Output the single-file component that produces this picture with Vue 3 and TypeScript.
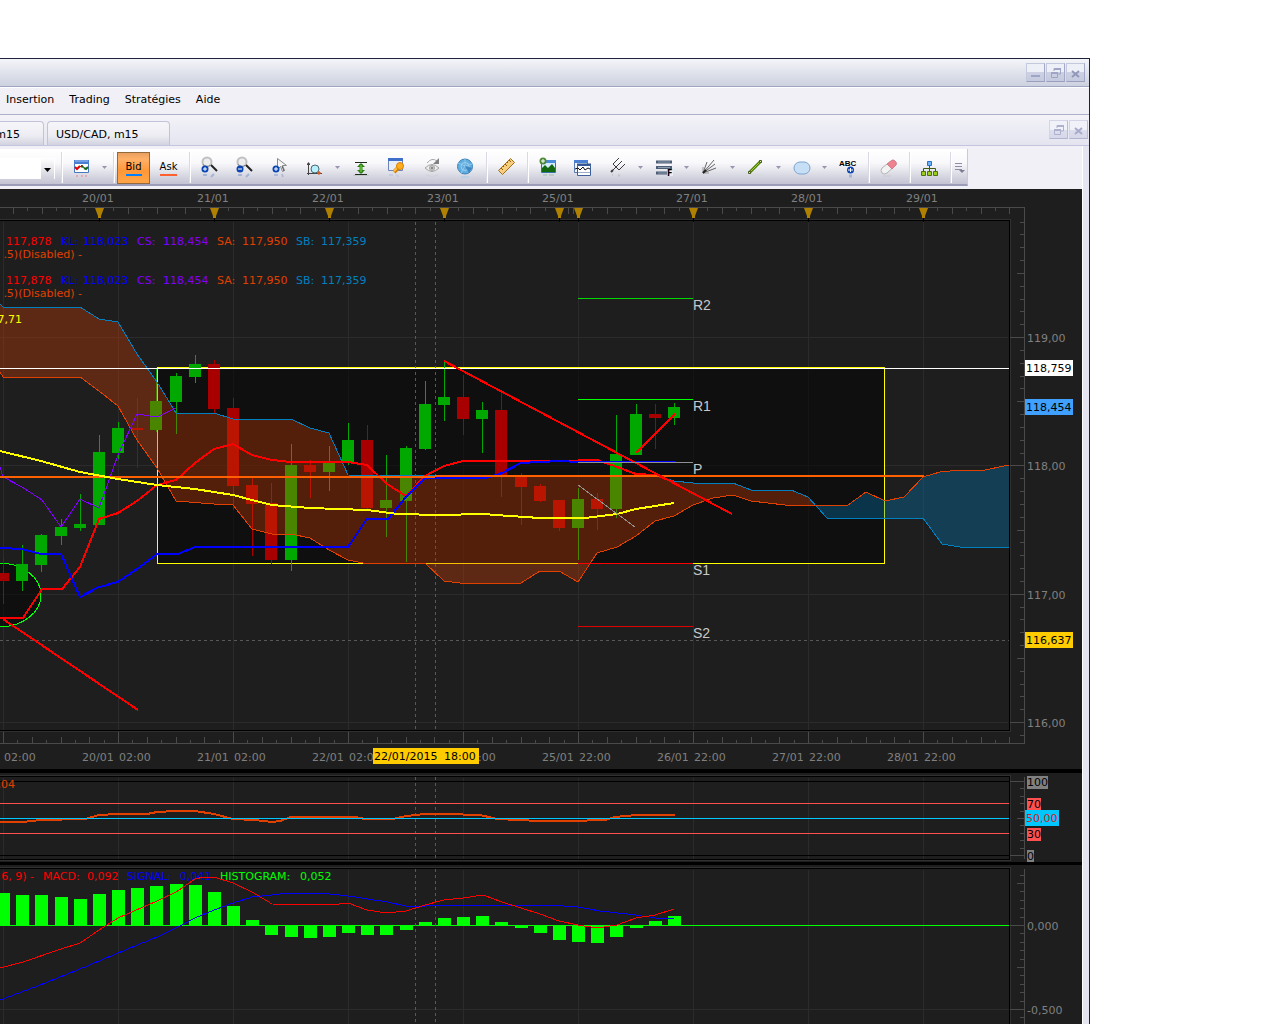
<script setup lang="ts">
type Candle = [high: number, top: number, bottom: number, low: number, up: 0 | 1]

const STEP = 115
const candleX = (i: number) => Math.round(3 + (i * STEP) / 6)

// high, body top, body bottom, low (screen rows), 1 = rising
const candles: Candle[] = [
  [557, 573, 581, 604, 0], [545, 564, 581, 591, 1], [534, 535, 565, 572, 1], [519, 527, 536, 545, 1],
  [494, 524, 528, 531, 1], [435, 452, 525, 525, 1], [422, 428, 453, 459, 1], [398, 428, 430, 468, 0],
  [369, 401, 430, 432, 1], [373, 376, 402, 434, 1], [355, 364, 377, 383, 1], [360, 364, 409, 414, 0],
  [398, 408, 486, 510, 0], [477, 485, 504, 556, 0], [483, 503, 560, 564, 0], [444, 465, 560, 571, 1],
  [460, 465, 472, 498, 0], [446, 463, 472, 491, 1], [423, 440, 463, 465, 1], [425, 440, 508, 509, 0],
  [455, 500, 508, 537, 1], [446, 448, 501, 562, 1], [381, 404, 449, 450, 1], [361, 397, 405, 421, 1],
  [375, 397, 419, 435, 0], [402, 410, 419, 453, 1], [391, 410, 475, 497, 0], [473, 475, 487, 525, 0],
  [484, 486, 501, 502, 0], [500, 500, 528, 531, 0], [488, 499, 528, 560, 1], [493, 499, 509, 530, 0],
  [415, 454, 509, 518, 1], [404, 414, 455, 455, 1], [404, 414, 418, 449, 0], [403, 407, 418, 425, 1],
]

const histogram = [
  893, 895, 895, 897, 899, 894, 890, 888, 886, 884, 885, 892, 906, 920, 935, 937, 938, 937,
  933, 935, 935, 930, 922, 918, 917, 916, 922, 928, 933, 940, 942, 943, 937, 928, 921, 916,
]

const majors = Array.from({ length: 9 }, (_, i) => 3 + i * STEP)
const grid = majors.map((x) => x + 0.5)
const markers = [99, 214, 329, 444, 559, 578, 693, 808, 923]

interface Tick { x: number; size: number }
function ticks(origin: number, from: number, to: number): Tick[] {
  const out: Tick[] = []
  for (let k = -80; k < 80; k++) {
    const x = Math.round(origin + k * 14.375)
    if (x >= from && x <= to) out.push({ x: x + 0.5, size: k % 2 === 0 ? 6 : 3 })
  }
  return out
}
const topTicks = [...ticks(99, 0, 560), { x: 568.5, size: 6 }, { x: 573.5, size: 6 }, ...ticks(578, 579, 1010)]
const bottomTicks = ticks(3, 0, 1010)

const topLabels = [
  { x: 82, t: '20/01' }, { x: 197, t: '21/01' }, { x: 312, t: '22/01' }, { x: 427, t: '23/01' },
  { x: 542, t: '25/01' }, { x: 676, t: '27/01' }, { x: 791, t: '28/01' }, { x: 906, t: '29/01' },
]
const bottomLabels = [
  ['19/01', '02:00'], ['20/01', '02:00'], ['21/01', '02:00'], ['22/01', '02:00'], ['22/01', '22:00'],
  ['25/01', '22:00'], ['26/01', '22:00'], ['27/01', '22:00'], ['28/01', '22:00'],
].map(([day, hour], i) => ({ day, hour, x: 3 + i * STEP - 36 }))

const legend = [
  { x: 61, vx: 83, t: 'KL:', v: '118,023', c: '#0000ff' },
  { x: 137, vx: 163, t: 'CS:', v: '118,454', c: '#8000ff' },
  { x: 217, vx: 242, t: 'SA:', v: '117,950', c: '#e04000' },
  { x: 296, vx: 321, t: 'SB:', v: '117,359', c: '#0080c0' },
]
const macdLegend = [
  { x: 43, vx: 87, t: 'MACD:', v: '0,092', c: '#ff0000' },
  { x: 127, vx: 180, t: 'SIGNAL:', v: '0,041', c: '#0000ff' },
  { x: 220, vx: 300, t: 'HISTOGRAM:', v: '0,052', c: '#00ff00' },
]

const priceTicks = Array.from({ length: 41 }, (_, i) => {
  const k = i - 1
  const y = Math.round(722 - k * 12.83) + 0.5
  return { y, size: k % 10 === 0 ? 14 : k % 5 === 0 ? 7 : 4 }
})
const prices = [
  { y: 342, t: '119,00' }, { y: 470, t: '118,00' }, { y: 599, t: '117,00' }, { y: 727, t: '116,00' },
]
const priceTags = [
  { y: 360, t: '118,759', c: '#ffffff' }, { y: 399, t: '118,454', c: '#40a0ff' }, { y: 632, t: '116,637', c: '#ffcc00' },
]
const rsiTicks = Array.from({ length: 11 }, (_, i) => ({
  y: Math.round(781 + i * 7.4) + 0.5, size: i % 10 === 0 ? 14 : i % 5 === 0 ? 7 : 4,
}))
const rsiTags = [
  { y: 776, w: 21, t: '100', c: '#808080' }, { y: 798, w: 14, t: '70', c: '#ff5050' },
  { y: 828, w: 14, t: '30', c: '#ff5050' }, { y: 850, w: 7, t: '0', c: '#808080' },
]
const macdTicks = Array.from({ length: 18 }, (_, i) => {
  const k = i - 6
  return { y: Math.round(925 + k * 8.4) + 0.5, size: k % 10 === 0 ? 14 : k % 5 === 0 ? 7 : 4 }
})

const pivots = [
  { y: 298, t: 'R2', c: '#00d800' }, { y: 399, t: 'R1', c: '#00ff00' }, { y: 462, t: 'P', c: '#909090' },
  { y: 563, t: 'S1', c: '#ff0000' }, { y: 626, t: 'S2', c: '#e00000' },
]

const spanB = '0,304 3,307 80,307 99,319 118,322 137,354 157,382 176,413 214,413 233,419 291,419 310,428 329,433 348,475 445,476 657,476 674,481 693,483 733,483 751,490 791,490 808,497'
const spanBTail = '827,518 923,518 942,544 960,547 1009,547'
const spanA = '0,372 3,377 80,377 99,391 118,406 137,440 157,468 176,501 214,504 233,505 252,529 272,534 291,534 310,538 329,550 348,560 363,563 425,563 444,581 460,583 521,583 540,571 559,571 578,582 597,553 617,547 636,536 655,521 674,516 693,505 713,498 733,495 751,501 785,505'
const spanATail = '848,505 866,492 885,501 904,497 923,477 940,472 960,470 985,470 1009,465'
const reverse = (s: string) => s.split(' ').reverse().join(' ')
const cloudRed = `${spanB} 815,505 ${reverse(spanA)}`
const cloudBlue = `815,505 ${spanATail} ${reverse(spanBTail)}`

const tenkan = '0,618 23,618 42,589 62,589 80,567 99,519 118,513 137,501 157,485 176,480 195,463 214,449 233,444 252,455 272,460 291,462 348,462 367,465 387,484 406,496 425,476 444,466 463,461 560,461 597,460 617,467 636,474 655,475 674,482'
const kijun = '0,548 22,549 41,554 61,554 80,597 99,587 118,582 137,569 157,554 178,554 195,547 348,547 367,519 388,519 406,497 425,478 486,478 502,473 521,463 560,461 578,462'
const average = '0,451 41,461 80,472 118,479 157,485 195,489 233,495 252,500 272,505 310,508 367,510 398,514 440,515 483,514 510,516 540,518 585,518 617,514 636,509 655,506 674,503'
const chikou = '0,467 3,477 22,487 42,500 61,527 80,499 99,508 118,455 137,414 157,417 176,408'
const rsi = '0,822 23,822 40,820 85,819 99,815 118,814 147,814 157,812 176,811 195,811 214,814 233,819 255,820 272,822 280,821 291,817 355,817 365,819 393,819 406,816 425,814 445,814 480,815 497,819 540,821 569,821 605,820 615,817 637,815 675,815'
const macd = '0,968 23,962 61,949 80,943 99,930 118,918 157,901 176,892 195,879 204,877 214,877 233,883 252,892 272,904 330,905 348,903 367,910 387,913 406,911 425,905 444,900 463,898 483,895 502,902 521,908 540,914 559,921 578,925 597,928 617,925 636,918 655,915 674,909'
const signal = '0,1000 40,985 80,969 118,953 157,937 176,928 195,918 214,910 233,903 252,897 290,893 320,893 348,896 387,902 406,906 425,906 470,905 550,905 578,907 600,911 636,915 655,918 674,919'

const menu = ['Insertion', 'Trading', 'Stratégies', 'Aide']
</script>

<template>
  <div class="window">
    <header class="title">
      <button class="win" aria-label="Réduire"><svg width="17" height="17"><path d="M4 12h9" stroke="#9fa5c6" stroke-width="2" /></svg></button>
      <button class="win" aria-label="Restaurer"><svg width="17" height="17" fill="none" stroke="#9fa5c6"><path d="M7 7V4.500H13.500V10H11" /><path d="M7 5h7" stroke-width="2" /><path d="M4.500 8.500h6v5h-6z" /><path d="M4 9h7" stroke-width="2" /></svg></button>
      <button class="win" aria-label="Fermer"><svg width="17" height="17"><path d="M5 7l7 6M12 7l-7 6" stroke="#9298b8" stroke-width="2" /></svg></button>
    </header>
    <nav class="menu">
      <button v-for="m in menu" :key="m">{{ m }}</button>
    </nav>
    <div class="tabs">
      <button class="tab cut"><span>m15</span></button>
      <button class="tab full">USD/CAD, m15</button>
      <div class="grow"></div>
      <button class="win pale" aria-label="Restaurer le graphique"><svg width="17" height="17" fill="none" stroke="#aeb1cd"><path d="M7 7V4.500H13.500V10H11" /><path d="M7 5h7" stroke-width="2" /><path d="M4.500 8.500h6v5h-6z" /><path d="M4 9h7" stroke-width="2" /></svg></button>
      <button class="win pale" aria-label="Fermer le graphique"><svg width="17" height="17"><path d="M5 7l7 6M12 7l-7 6" stroke="#a8abc8" stroke-width="2" /></svg></button>
    </div>
    <main class="client">
      <div class="toolrow">
        <div class="toolbar">
          <div class="combo">
            <select aria-label="Période"><option></option></select>
            <span class="drop"><svg width="13" height="20"><path d="M3 10h7l-3.500 4z" fill="#000" /></svg></span>
          </div>
          <i class="sep"></i>
          <button class="tool" aria-label="Type de graphique">
            <svg width="23" height="24"><path d="M4.500 5.500h14v12h-14z" fill="#fff" stroke="#4a78c0" /><path d="M4 5h15v4H4z" fill="#4a7fd0" /><path d="M5 6h13" stroke="#9cc0f4" /><path d="M5 12l2 2 3-3" fill="none" stroke="#e00000" stroke-width="2" /><path d="M10 12l2-2 2 3" fill="none" stroke="#e00000" stroke-width="1" /><path d="M11 11l2 1M14 13l2 1 2-2" fill="none" stroke="#106818" stroke-width="2" /><path d="M6 21h2M11 21h2M15 21h2" stroke="#e5a9b4" stroke-width="2" /></svg>
          </button>
          <button class="caret" aria-label="Plus de types"><svg width="7" height="4"><path d="M1 0h5l-2.500 3z" /></svg></button>
          <i class="sep"></i>
          <button class="tool quote on"><span>Bid</span></button>
          <button class="tool quote"><span>Ask</span></button>
          <i class="sep"></i>
          <button class="tool" aria-label="Zoom avant">
            <svg width="23" height="24"><circle cx="9" cy="7" r="4.500" fill="#ededed" stroke="#c0c0c0" stroke-width="2" /><path d="M5 9a4 4 0 007 1" fill="none" stroke="#888" /><path d="M13 10l6 6" stroke="#222" stroke-width="2" /><circle cx="7" cy="14" r="3.500" fill="#0a46b4" /><path d="M5 14h4M7 12v4" stroke="#fff" /><path d="M5 20h4M16 19l-3 3" stroke="#a5b4d4" stroke-width="2" /></svg>
          </button>
          <button class="tool" aria-label="Zoom arrière">
            <svg width="23" height="24"><circle cx="9" cy="7" r="4.500" fill="#ededed" stroke="#c0c0c0" stroke-width="2" /><path d="M5 9a4 4 0 007 1" fill="none" stroke="#888" /><path d="M13 10l6 6" stroke="#222" stroke-width="2" /><circle cx="7" cy="14" r="3.500" fill="#0a46b4" /><path d="M5 14h4" stroke="#fff" /><path d="M5 20h4M16 19l-3 3" stroke="#a5b4d4" stroke-width="2" /></svg>
          </button>
          <button class="tool" aria-label="Curseur">
            <svg width="23" height="24"><path d="M9.500 3.500v11l3-3 2 5 2-1-2-5h4z" fill="#f6f6f6" stroke="#888" /><path d="M14 11l2 5" stroke="#555" /><circle cx="8" cy="14" r="3.500" fill="#0a46b4" /><path d="M6 14h4M8 12v4" stroke="#fff" /><path d="M6 20h4M14 19l1 3" stroke="#b0bad4" stroke-width="2" /></svg>
          </button>
          <button class="tool" aria-label="Zoom axe">
            <svg width="23" height="24"><path d="M5.500 8v12M4 9.500h3M4 18.500h15" stroke="#444" fill="none" /><path d="M4 9l1.500-2L7 9z" fill="#444" /><circle cx="12" cy="14" r="4" fill="#b5f0fb" stroke="#4c6673" /><path d="M15 17l2 2" stroke="#d05a20" stroke-width="3" /></svg>
          </button>
          <button class="caret" aria-label="Plus de zooms"><svg width="7" height="4"><path d="M1 0h5l-2.500 3z" /></svg></button>
          <button class="tool" aria-label="Ajuster la hauteur">
            <svg width="23" height="24"><path d="M6 7.500h12M6 19.500h12" stroke="#1d2a1d" /><path d="M12 9v9" stroke="#2f8f14" stroke-width="3" /><path d="M8 12l4-4 4 4zM8 15l4 4 4-4z" fill="#2f7d14" /><path d="M12 10v7" stroke="#7ddf50" /><path d="M4 20.500h16" stroke="#c5c8c8" /></svg>
          </button>
          <button class="tool" aria-label="Propriétés">
            <svg width="23" height="24"><path d="M4.500 3.500h14v12h-14z" fill="#e8eefb" stroke="#6c84b8" /><path d="M4 3h15v3H4z" fill="#3f6fc8" /><path d="M10 17l5-5" stroke="#d98200" stroke-width="4" /><path d="M10 16l5-5" stroke="#ffc04a" stroke-width="2" /><circle cx="16" cy="11" r="3.500" fill="#ffad1f" stroke="#d98200" /><path d="M5 20h4M12 20l3 2" stroke="#c5cbe0" stroke-width="2" /></svg>
          </button>
          <button class="tool" aria-label="Afficher ou masquer">
            <svg width="23" height="24" fill="none" stroke="#a4a4a4"><path d="M6 13q7-7 14 0q-7 7-14 0z" fill="#ececec" /><circle cx="13" cy="13" r="2.500" fill="#ddd" /><circle cx="13" cy="13" r="1" fill="#888" stroke="#888" /><path d="M8 8q5-6 10-2" stroke="#a8a8a8" stroke-width="1" /><path d="M20 3v6h-6z" fill="#808080" stroke="none" /><path d="M7 20q6 3 12 0" stroke="#d0d0d6" /></svg>
          </button>
          <button class="tool" aria-label="Réseau">
            <svg width="23" height="24"><circle cx="11" cy="11.500" r="7.500" fill="#62aee0" stroke="#3d82b8" /><path d="M11 11L4 8M11 11V4M11 11l7-2M11 11l6 5M11 11l-4 7" stroke="#8cc6ec" /><circle cx="11" cy="11.500" r="4" fill="none" stroke="#9bd0f0" /><path d="M11 11l7 2-3 5z" fill="#3f86c0" /><path d="M7 22h8" stroke="#bdd0e4" stroke-width="2" /></svg>
          </button>
          <i class="sep"></i>
          <button class="tool" aria-label="Règle">
            <svg width="23" height="24"><path d="M3.500 15.500l12-12 4 4-12 12z" fill="#f7cf7c" stroke="#a0701c" /><path d="M6 13l2 2M8 11l1 1M10 9l2 2M12 7l1 1M14 5l2 2" stroke="#8a5c10" /></svg>
          </button>
          <i class="sep"></i>
          <button class="tool" aria-label="Ajouter une image">
            <svg width="23" height="24"><path d="M5.500 5.500h14v12h-14z" fill="#d5ecff" stroke="#3570a8" /><path d="M5 5h15v3H5z" fill="#4b8bdc" /><path d="M6 17v-4l3-3 3 3 4-4 3 4v4z" fill="#12680f" /><circle cx="7" cy="6" r="3.500" fill="#4c8a34" /><path d="M5 6h4M7 4v4" stroke="#fff" /><path d="M7 20h4M13 20h5" stroke="#bccdc6" stroke-width="2" /></svg>
          </button>
          <button class="tool" aria-label="Ajouter un indicateur">
            <svg width="23" height="24"><path d="M3.500 5.500h13v12h-13z" fill="#eef3fd" stroke="#5d7cb4" /><path d="M3 5h14v3H3z" fill="#4b7fd4" /><path d="M6.500 10.500h13v10h-13z" fill="#fff" stroke="#3c5f98" /><path d="M6 9.500h14" stroke="#345690" stroke-width="2" /><path d="M4 14l3-1 2 2 3-3 2 3 3-2 2 1" fill="none" stroke="#111" /><path d="M7 17.500h12" stroke="#9dadc9" /></svg>
          </button>
          <button class="tool" aria-label="Fourchette">
            <svg width="23" height="24" fill="none" stroke="#3a3a3a"><path d="M5 17l5-5M7 9l6 6M7 9l6-6M10 12l6-6M13 15l6-6" /><path d="M5 17l2-2" stroke-width="2" /><path d="M6 20h1M12 20l2 1" stroke="#c4c4cc" stroke-width="2" /></svg>
          </button>
          <button class="caret" aria-label="Plus de fourchettes"><svg width="7" height="4"><path d="M1 0h5l-2.500 3z" /></svg></button>
          <button class="tool" aria-label="Fibonacci">
            <svg width="23" height="24"><path d="M4 7h16M4 12.500h16M4 18h16" stroke="#4c5d74" stroke-width="3" /><path d="M6 7h12M6 12.500h12M6 18h9" stroke="#8c9db2" /><path d="M15 15h6v6h-6z" fill="#eeeef4" /><text x="15" y="21" font-size="8" font-weight="bold">F</text></svg>
          </button>
          <button class="caret" aria-label="Plus de Fibonacci"><svg width="7" height="4"><path d="M1 0h5l-2.500 3z" /></svg></button>
          <button class="tool" aria-label="Éventail">
            <svg width="23" height="24" fill="none" stroke="#666"><path d="M5 18l4-11M5 18L16 5M5 18l13-5M5 18l12-9" /><path d="M5 12v6h6" stroke="#999" /><path d="M5 18l3-3" stroke="#222" stroke-width="2" /></svg>
          </button>
          <button class="caret" aria-label="Plus d'éventails"><svg width="7" height="4"><path d="M1 0h5l-2.500 3z" /></svg></button>
          <button class="tool" aria-label="Ligne">
            <svg width="23" height="24"><path d="M8 20h10" stroke="#d6d8da" stroke-width="1" /><path d="M5 18L17 6" stroke="#4f7a08" stroke-width="3" /><path d="M5 18L17 6" stroke="#9bd81c" /><path d="M4.500 16.500h2v2h-2zM15.500 5.500h2v2h-2z" fill="#dceca8" stroke="#4a5a20" /></svg>
          </button>
          <button class="caret" aria-label="Plus de lignes"><svg width="7" height="4"><path d="M1 0h5l-2.500 3z" /></svg></button>
          <button class="tool" aria-label="Ellipse">
            <svg width="23" height="24"><rect x="4" y="7" width="16" height="12" rx="6" fill="#c6dff4" stroke="#7ba4cf" /></svg>
          </button>
          <button class="caret" aria-label="Plus de formes"><svg width="7" height="4"><path d="M1 0h5l-2.500 3z" /></svg></button>
          <button class="tool" aria-label="Texte">
            <svg width="23" height="24"><text x="3" y="11" font-size="8" font-weight="bold" class="abc">ABC</text><circle cx="14.500" cy="15" r="3.500" fill="#0a46b4" /><path d="M12 15h5M14.500 13v4" stroke="#fff" /><path d="M13 21h3" stroke="#a5b4d4" stroke-width="3" /></svg>
          </button>
          <i class="sep"></i>
          <button class="tool" aria-label="Gomme">
            <svg width="23" height="24"><path d="M5 13l9-7q2-2 4 0t1 4l-9 8q-3 2-5 0t0-5z" fill="#f2f2f2" stroke="#b4b4b4" /><path d="M10 9l4-3q2-2 4 0t1 4l-4 4z" fill="#ee8390" stroke="#d87a88" /><path d="M6 21h8" stroke="#c8c8d0" stroke-width="1" /></svg>
          </button>
          <i class="sep"></i>
          <button class="tool" aria-label="Arborescence">
            <svg width="23" height="24"><path d="M11.500 10v6M5.500 16v-2.500h12V16" fill="none" stroke="#3c5c10" /><path d="M9.500 6.500h4v4h-4z" fill="#6eb2f8" stroke="#2673cf" /><path d="M3.500 16.500h4v4h-4zM9.500 16.500h4v4h-4zM15.500 16.500h4v4h-4z" fill="#9ccc1c" stroke="#4e7408" /></svg>
          </button>
          <i class="sep"></i>
          <button class="more" aria-label="Options de la barre"><svg width="12" height="12"><path d="M1 .5h7M1 3.500h7M1 6.500h7" stroke="#8d8da3" /><path d="M5 7h6l-3 3z" fill="#7c7c92" /></svg></button>
        </div>
      </div>

      <section class="panel" aria-label="Cours">
        <svg class="plot" height="580">
          <g transform="translate(0 -189)">
            <g class="crisp">
              <path d="M0 207.500H1010M0 743.500H1010" class="axis" />
              <path v-for="t in topTicks" :key="'t' + t.x" :d="`M${t.x} 208v${t.size}`" class="axis" />
              <path v-for="t in bottomTicks" :key="'b' + t.x" :d="`M${t.x} 743v-${t.size}`" class="axis" />
              <path v-for="x in grid" :key="'g' + x" :d="`M${x} 222V730`" class="grid" />
              <path v-for="x in grid" :key="'m' + x" :d="`M${x} 730V743`" class="axis" />
              <path d="M0 337.500H1008M0 465.500H1008M0 594.500H1008M0 722.500H1008" class="grid" />
              <path d="M0 219.500H1010M0 731.500H1010" class="rim" />
              <path d="M0 220.500H1009.500V730.500H0" class="frame" />
              <path v-for="x in markers" :key="'k' + x" :d="`M${x + 0.5} 216v6`" stroke="#000" />
            </g>
            <path v-for="x in markers" :key="'a' + x" :d="`M${x - 4} 208h9l-3 8v2h-3v-2z`" fill="#b08000" />
            <text v-for="l in topLabels" :key="l.t" :x="l.x" y="202" class="dim">{{ l.t }}</text>
            <g v-for="l in bottomLabels" :key="l.x" class="dim">
              <text :x="l.x" y="761">{{ l.day }}</text>
              <text :x="l.x + 37" y="761">{{ l.hour }}</text>
            </g>
            <rect x="373" y="748" width="106" height="16" fill="#ffcc00" />
            <text x="374" y="760">22/01/2015</text>
            <text x="444" y="760">18:00</text>

            <g class="crisp">
              <rect x="157.500" y="367.500" width="727" height="196" fill="#000" fill-opacity=".5" stroke="#ffff00" />
              <ellipse cx="-1" cy="595" rx="42" ry="32" fill="#000" fill-opacity=".5" stroke="#00ff00" />
              <g v-for="(c, i) in candles" :key="i" :fill="c[4] ? '#00a800' : '#a80000'">
                <rect :x="candleX(i)" :y="c[0]" width="1" :height="c[3] - c[0]" />
                <rect :x="candleX(i) - 6" :y="c[1]" width="12" :height="c[2] - c[1]" />
              </g>
              <polygon :points="cloudRed" fill="#e04000" fill-opacity=".33" />
              <polygon :points="cloudBlue" fill="#0080c0" fill-opacity=".33" />
              <polyline :points="`${spanA} ${spanATail}`" class="line" stroke="#e04000" />
              <polyline :points="`${spanB} ${spanBTail}`" class="line" stroke="#0080c0" />
              <path d="M415.500 222V730M435.500 222V730M0 640.500H1009" class="cross" />
              <path d="M0 368.500H1009" stroke="#fff" />
              <polyline :points="chikou" class="line" stroke="#8000ff" />
              <polyline :points="tenkan" class="line bold" stroke="#ff0000" />
              <polyline :points="kijun" class="line bold" stroke="#0000ff" />
              <path d="M578 461.500h97" stroke="#0000ff" />
              <path d="M0 477H435M435 476H924" stroke="#ff6000" stroke-width="2" />
              <polyline :points="average" class="line bold" stroke="#ffff00" />
              <path d="M3 619L138 710M444 361L732 514M636 453L675 414" stroke="#ff0000" stroke-width="2" />
              <path d="M578 485l57 42" stroke="#909090" />
              <path v-for="p in pivots" :key="p.t" :d="`M578 ${p.y + 0.5}h115`" :stroke="p.c" />
            </g>
            <text v-for="p in pivots" :key="p.t" x="693" :y="p.y + 12" class="pivot">{{ p.t }}</text>

            <g v-for="y in [245, 284]" :key="y">
              <text x="6" :y="y" fill="#ff0000">117,878</text>
              <g v-for="l in legend" :key="l.t" :fill="l.c">
                <text :x="l.x" :y="y">{{ l.t }}</text>
                <text :x="l.vx" :y="y">{{ l.v }}</text>
              </g>
              <text x="82" :y="y + 13" fill="#e04000" text-anchor="end">.5)(Disabled) -</text>
            </g>
            <text x="22" y="323" fill="#ffff00" text-anchor="end">7,71</text>
          </g>
        </svg>
        <svg class="scale" height="580">
          <g transform="translate(-1010 -189)">
            <g class="crisp">
              <path d="M1010.500 219V732" class="rim" />
              <path d="M1010 207.500H1024.500V743.500H1010" class="axis" fill="none" />
              <path v-for="t in priceTicks" :key="t.y" :d="`M1024 ${t.y}h-${t.size}`" class="axis" />
            </g>
            <text v-for="p in prices" :key="p.t" x="1027" :y="p.y" class="dim">{{ p.t }}</text>
            <g v-for="p in priceTags" :key="p.t">
              <rect x="1025" :y="p.y" width="48" height="16" :fill="p.c" />
              <text x="1026" :y="p.y + 12">{{ p.t }}</text>
            </g>
          </g>
        </svg>
      </section>

      <section class="panel" aria-label="RSI">
        <svg class="plot" height="89">
          <g transform="translate(0 -773)">
            <g class="crisp">
              <path v-for="x in grid" :key="x" :d="`M${x} 778V859`" class="grid" />
              <path d="M0 775.500H1010M0 860.500H1010" class="rim" />
              <path d="M0 776.500H1009.500V859.500H0M0 781.500H1009M0 855.500H1009" class="frame" />
              <path d="M415.500 777V859M435.500 777V859" class="cross" />
              <path d="M0 803.500H1009M0 833.500H1009" stroke="#ff5050" />
              <polyline :points="rsi" class="line bold" stroke="#e04000" />
              <path d="M0 818.500H1009" stroke="#00c8ff" />
            </g>
            <text x="15" y="788" fill="#e04000" text-anchor="end">,04</text>
          </g>
        </svg>
        <svg class="scale" height="89">
          <g transform="translate(-1010 -773)">
            <g class="crisp">
              <path d="M1010.500 775V861" class="rim" />
              <path d="M1024.500 777V859" class="axis" />
              <path v-for="t in rsiTicks" :key="t.y" :d="`M1024 ${t.y}h-${t.size}`" class="axis" />
            </g>
            <g v-for="p in rsiTags" :key="p.t">
              <rect x="1027" :y="p.y" :width="p.w" height="13" :fill="p.c" />
              <text x="1027" :y="p.y + 10">{{ p.t }}</text>
            </g>
            <rect x="1025" y="810" width="34" height="16" fill="#00c8ff" />
            <text x="1026" y="822" fill="#d02020">50,00</text>
          </g>
        </svg>
      </section>

      <section class="panel last" aria-label="MACD">
        <svg class="plot" height="159">
          <g transform="translate(0 -865)">
            <g class="crisp">
              <path v-for="x in grid" :key="x" :d="`M${x} 870V1024`" class="grid" />
              <path d="M0 1009.500H1009" class="grid" />
              <path d="M0 867.500H1010" class="rim" />
              <path d="M0 868.500H1009.500V1024" class="frame" />
              <rect v-for="(y, i) in histogram" :key="i" :x="candleX(i) - 6" :y="Math.min(y, 925)" width="13" :height="Math.abs(y - 925)" fill="#00ff00" />
              <path d="M0 925.500H1009" stroke="#00ff00" />
              <path d="M415.500 869V1024M435.500 869V1024" class="cross" />
            </g>
            <text x="34" y="880" fill="#ff0000" text-anchor="end">6, 9) -</text>
            <g v-for="l in macdLegend" :key="l.t" :fill="l.c">
              <text :x="l.x" y="880">{{ l.t }}</text>
              <text :x="l.vx" y="880">{{ l.v }}</text>
            </g>
            <g class="crisp">
              <polyline :points="signal" class="line" stroke="#0000ff" />
              <polyline :points="macd" class="line" stroke="#ff0000" />
            </g>
          </g>
        </svg>
        <svg class="scale" height="159">
          <g transform="translate(-1010 -865)">
            <g class="crisp">
              <path d="M1010.500 867V1024" class="rim" />
              <path d="M1024.500 869V1024" class="axis" />
              <path v-for="t in macdTicks" :key="t.y" :d="`M1024 ${t.y}h-${t.size}`" class="axis" />
            </g>
            <text x="1027" y="930" class="dim">0,000</text>
            <text x="1027" y="1014" class="dim">-0,500</text>
          </g>
        </svg>
      </section>
    </main>
  </div>
</template>

<style>
body {
  background: #fff;
}
</style>

<style scoped>
.window {
  margin: 58px 190px 0 0;
  border-top: 1px solid #20223a;
  border-right: 1px solid #20223a;
  background: #e4e5f0;
  font: 11px/14px "DejaVu Sans", Verdana, sans-serif;
  color: #000;
}
button {
  border: 0;
  padding: 0;
  margin: 0;
  background: none;
  font: inherit;
  color: inherit;
}
svg {
  display: block;
}
.title {
  display: flex;
  justify-content: flex-end;
  gap: 1px;
  height: 28px;
  padding: 4px 4px 0 0;
  box-sizing: border-box;
  background: linear-gradient(#f4f5f9, #cdd1df);
  border-bottom: 1px solid #9fa6c4;
}
.win {
  width: 19px;
  height: 19px;
  border: 1px solid #c5c9de;
  border-right-color: #a5a9c8;
  border-bottom-color: #9a9fc0;
  background: linear-gradient(#eef0f8 0 50%, #cdd1e3 50%, #c6cade);
}
.pale {
  border-color: #d3d5e6 #b9bcd4 #b2b5d0 #d3d5e6;
  background: linear-gradient(#f0f1f9 0 50%, #dddfee 50%, #d6d8ea);
}
.menu {
  display: flex;
  align-items: center;
  gap: 15px;
  height: 28px;
  padding: 0 6px 2px;
  box-sizing: border-box;
  background: #f0f0f6;
  border-top: 1px solid #fff;
  border-bottom: 1px solid #aeb0cb;
}
.tabs {
  display: flex;
  align-items: flex-end;
  gap: 3px;
  height: 31px;
  box-sizing: border-box;
  background: linear-gradient(#f3f3f8, #e3e4ef);
  border-bottom: 1px solid #c4c4dc;
}
.tabs .win {
  align-self: flex-start;
  margin: 5px 1px 0 -3px;
}
.grow {
  flex: 1;
}
.tab {
  height: 24px;
  padding-top: 2px;
  box-sizing: border-box;
  border: 1px solid #c2c3da;
  border-bottom: 0;
  border-radius: 4px 4px 0 0;
  background: linear-gradient(#f6f6fa, #ececf3 60%, #d2d3e0);
  text-align: left;
}
.cut {
  display: flex;
  justify-content: flex-end;
  align-items: center;
  width: 44px;
  padding-right: 23px;
  border-left: 0;
  border-top-left-radius: 0;
  overflow: hidden;
}
.full {
  width: 123px;
  padding-left: 8px;
}
.client {
  margin-right: 7px;
  box-shadow: 1px 0 #fff;
}
.toolrow {
  height: 43px;
  padding-top: 3px;
  box-sizing: border-box;
  background: #f0f0f6;
}
.toolbar {
  display: flex;
  width: max-content;
  height: 37px;
  box-sizing: border-box;
  background: linear-gradient(#fff, #f8f8fb 40%, #c3c3d3);
  border-bottom: 2px solid #9c9cb8;
  border-right: 1px solid #c9c9d8;
}
.combo {
  display: flex;
  width: 55px;
  height: 21px;
  margin: 9px 3px 0 0;
  background: #fff;
}
.combo select {
  flex: 1;
  min-width: 0;
  border: 0;
  padding: 0;
  background: #fff;
  appearance: none;
}
.drop {
  width: 13px;
  border-right: 1px solid #fff;
  background: linear-gradient(#fff, #cfcfdb);
}
.sep {
  width: 2px;
  margin: 3px 1px 1px 3px;
  box-sizing: border-box;
  background: linear-gradient(90deg, #d9d9e3 50%, #fff 50%);
}
.tool {
  display: flex;
  justify-content: center;
  width: 35px;
  padding-top: 6px;
}
.caret {
  display: flex;
  justify-content: center;
  width: 11px;
  padding-top: 17px;
  fill: #9696b0;
}
.more {
  display: flex;
  justify-content: center;
  width: 14px;
  padding-top: 14px;
}
.quote {
  height: 32px;
  margin-top: 3px;
  padding: 0;
  align-items: center;
  font-size: 10px;
}
.quote span {
  border-bottom: 2px solid #ff6030;
}
.on {
  width: 33px;
  margin: 3px 1px 0;
  border: 1px solid #946a3c;
  box-sizing: border-box;
  background: linear-gradient(#e8a060, #ffb068 20%, #ff9838 60%, #ffa648);
}
.on span {
  border-bottom-color: #0080ff;
}
.panel {
  display: flex;
  background: #1e1e1e;
  border-bottom: 4px solid #000;
}
.panel:nth-of-type(2) {
  border-bottom-width: 3px;
}
.last {
  border-bottom: 0;
}
.plot {
  flex: 1;
  min-width: 0;
  overflow: hidden;
}
.scale {
  width: 72px;
  overflow: hidden;
}
.crisp {
  shape-rendering: crispEdges;
}
.axis {
  stroke: #4a4a4a;
}
.grid {
  stroke: #2b2b2b;
}
.rim {
  stroke: #303030;
}
.frame {
  stroke: #000;
  fill: none;
}
.cross {
  stroke: #585858;
  stroke-dasharray: 3 3;
}
.line {
  fill: none;
}
.bold {
  stroke-width: 2;
}
.dim {
  fill: #808080;
}
.pivot {
  font: 14px "Liberation Sans", Arial, sans-serif;
  fill: #c8c8c8;
}
.abc {
  font-family: "Liberation Sans", Arial, sans-serif;
}
</style>
